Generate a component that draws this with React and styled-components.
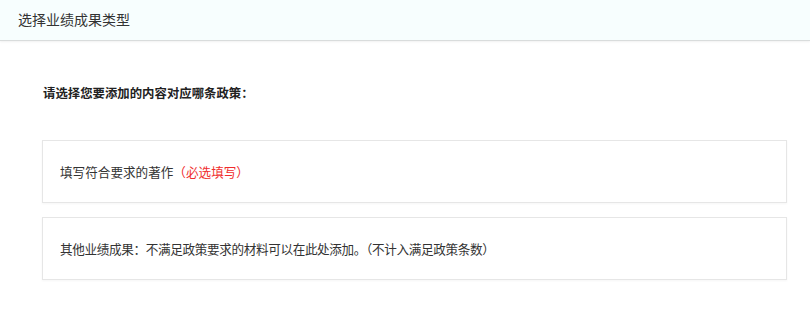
import React from "react";
import styled, { createGlobalStyle } from "styled-components";

const GlobalStyle = createGlobalStyle`
  * { box-sizing: border-box; }
  body {
    margin: 0;
    background: #fff;
    font-family: "Noto Sans CJK SC", "Noto Sans", sans-serif;
    color: #333;
  }
`;

const App = () => {
  return (
    <>
      <GlobalStyle />
      <Page>
        <Header>选择业绩成果类型</Header>
        <Body>
          <Question>请选择您要添加的内容对应哪条政策：</Question>
          <List>
            <Option>
              填写符合要求的著作<Required>（必选填写）</Required>
            </Option>
            <Option $tight>
              其他业绩成果：不满足政策要求的材料可以在此处添加。（不计入满足政策条数）
            </Option>
          </List>
        </Body>
      </Page>
    </>
  );
};

export default App;

const Page = styled.div`
  width: 810px;
  height: 315px;
  background: #fff;
`;

const Header = styled.div`
  height: 41px;
  display: flex;
  align-items: center;
  padding: 0 0 2px 18px;
  background: #f7fefe;
  border-bottom: 1px solid #d9dcdc;
  box-shadow: 0 1px 2px rgba(0, 0, 0, 0.06);
  font-size: 14px;
  color: #333;
`;

const Body = styled.div`
  padding: 43px 23px 0 42px;
`;

const Question = styled.div`
  padding-left: 1px;
  font-size: 12.4px;
  font-weight: bold;
  line-height: 18px;
  color: #222;
`;

const List = styled.div`
  margin-top: 38px;
  display: flex;
  flex-direction: column;
  gap: 14px;
`;

const Option = styled.div`
  height: 63px;
  display: flex;
  align-items: center;
  padding-left: 17px;
  border: 1px solid #e6e6e6;
  box-shadow: 0 1px 2px rgba(0, 0, 0, 0.04);
  background: #fff;
  font-size: 12.6px;
  letter-spacing: ${(p) => (p.$tight ? "-0.35px" : "0")};
  color: #333;
  cursor: pointer;
`;

const Required = styled.span`
  color: #f02c2c;
`;
